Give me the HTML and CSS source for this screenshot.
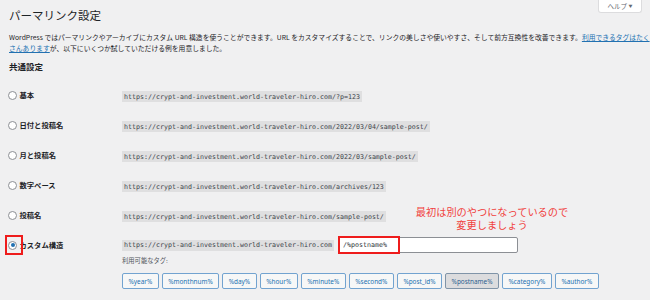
FILE: index.html
```html
<!DOCTYPE html>
<html lang="ja">
<head>
    <meta charset="UTF-8">
    <meta name="viewport" content="width=device-width, initial-scale=1.0">
    <title>パーマリンク設定</title>
    <link rel="stylesheet" href="styles.css">
</head>
<body>
    <div class="wrap">
        <div class="page-head">
            <h1>パーマリンク設定</h1>
            <button type="button" class="help-tab">ヘルプ <span class="caret">▼</span></button>
        </div>

        <p class="intro">WordPress ではパーマリンクやアーカイブにカスタム URL 構造を使うことができます。URL をカスタマイズすることで、リンクの美しさや使いやすさ、そして前方互換性を改善できます。<a href="#">利用できるタグはたく<br>さんあります</a>が、以下にいくつか試していただける例を用意しました。</p>

        <h2>共通設定</h2>

        <div class="settings">
            <div class="row">
                <label class="choice"><span class="radio"></span>基本</label>
                <div><code>https://crypt-and-investment.world-traveler-hiro.com/?p=123</code></div>
            </div>
            <div class="row">
                <label class="choice"><span class="radio"></span>日付と投稿名</label>
                <div><code>https://crypt-and-investment.world-traveler-hiro.com/2022/03/04/sample-post/</code></div>
            </div>
            <div class="row">
                <label class="choice"><span class="radio"></span>月と投稿名</label>
                <div><code>https://crypt-and-investment.world-traveler-hiro.com/2022/03/sample-post/</code></div>
            </div>
            <div class="row">
                <label class="choice"><span class="radio"></span>数字ベース</label>
                <div><code>https://crypt-and-investment.world-traveler-hiro.com/archives/123</code></div>
            </div>
            <div class="row">
                <label class="choice"><span class="radio"></span>投稿名</label>
                <div><code>https://crypt-and-investment.world-traveler-hiro.com/sample-post/</code></div>
            </div>
            <div class="row row-custom">
                <label class="choice"><span class="radio checked"><span class="mark-box mark-radio"></span></span>カスタム構造</label>
                <div>
                    <div class="custom-line">
                        <code>https://crypt-and-investment.world-traveler-hiro.com</code>
                        <div class="input-holder">
                            <input type="text" class="structure" value="/%postname%">
                            <span class="mark-box mark-input"></span>
                        </div>
                    </div>
                    <div class="tags-title">利用可能なタグ:</div>
                    <div class="tags">
                        <button type="button" class="tag">%year%</button>
                        <button type="button" class="tag">%monthnum%</button>
                        <button type="button" class="tag">%day%</button>
                        <button type="button" class="tag">%hour%</button>
                        <button type="button" class="tag">%minute%</button>
                        <button type="button" class="tag">%second%</button>
                        <button type="button" class="tag">%post_id%</button>
                        <button type="button" class="tag active">%postname%</button>
                        <button type="button" class="tag">%category%</button>
                        <button type="button" class="tag">%author%</button>
                    </div>
                </div>
            </div>
        </div>

        <div class="note">最初は別のやつになっているので<br>変更しましょう</div>
    </div>
</body>
</html>
```

FILE: styles.css
```css
body {
    margin: 0;
    background-color: #f0f0f1;
    color: #1d2327;
    font-family: "Noto Sans CJK JP", "Noto Sans", sans-serif;
    font-size: 6.8px;
}
.wrap {
    position: relative;
    padding: 0 8px 0 9px;
    height: 300px;
    overflow: hidden;
}
.page-head {
    display: flex;
    justify-content: space-between;
    align-items: flex-start;
}
h1 {
    margin: 8px 0 0;
    font-size: 11.5px;
    font-weight: 400;
    line-height: 14px;
}
.help-tab {
    width: 44px;
    height: 13px;
    padding: 0;
    background-color: #fff;
    border: 1px solid #dcdcde;
    border-top: none;
    border-radius: 0 0 3px 3px;
    color: #646970;
    font-family: inherit;
    font-size: 6.5px;
    line-height: 12px;
}
.caret {
    font-size: 4px;
    vertical-align: 1px;
}
.intro {
    margin: 10px 0 0;
    line-height: 10.5px;
    white-space: nowrap;
}
.intro a {
    color: #2271b1;
}
h2 {
    margin: 7px 0 0;
    font-size: 8.5px;
    font-weight: 700;
    line-height: 12px;
}
.settings {
    margin-top: 8px;
}
.row {
    display: grid;
    grid-template-columns: 113px auto;
    align-items: center;
    height: 30px;
}
.choice {
    display: flex;
    align-items: center;
    font-size: 7.3px;
    font-weight: 700;
}
.radio {
    position: relative;
    box-sizing: border-box;
    width: 9px;
    height: 9px;
    margin: 0 2.5px 0 -1px;
    background-color: #fff;
    border: 1px solid #8c8f94;
    border-radius: 50%;
}
.radio.checked::before {
    content: "";
    position: absolute;
    top: 1.5px;
    left: 1.5px;
    width: 4px;
    height: 4px;
    border-radius: 50%;
    background-color: #2271b1;
}
code {
    padding: 1.5px 2px;
    background-color: #dfdfe0;
    font-family: "DejaVu Sans Mono", monospace;
    font-size: 6.65px;
    line-height: 8px;
    color: #3c434a;
}
.row-custom {
    align-items: start;
    height: auto;
}
.row-custom .choice {
    height: 16px;
    margin-top: 7px;
}
.custom-line {
    display: flex;
    align-items: center;
    gap: 4px;
    height: 16px;
    margin-top: 7px;
}
.input-holder {
    position: relative;
}
.structure {
    box-sizing: border-box;
    width: 180px;
    height: 16px;
    padding: 0 4px;
    background-color: #fff;
    border: 1px solid #8c8f94;
    border-radius: 2px;
    font-family: "DejaVu Sans Mono", monospace;
    font-size: 6.65px;
    color: #2c3338;
}
.mark-box {
    position: absolute;
    box-sizing: border-box;
    border: 2px solid #ee1c1c;
}
.mark-radio {
    top: -6.5px;
    left: -4.5px;
    width: 18px;
    height: 20px;
}
.mark-input {
    top: -1px;
    left: 0;
    width: 62px;
    height: 18px;
}
.tags-title {
    margin-top: 2.5px;
    font-size: 6.3px;
    line-height: 9px;
    color: #50575e;
}
.tags {
    display: flex;
    gap: 3px;
    margin-top: 8.5px;
}
.tag {
    height: 16px;
    padding: 0 5.5px;
    background-color: #f6f7f7;
    border: 1px solid #72a3d0;
    border-radius: 2px;
    color: #2271b1;
    font-family: "Noto Sans", sans-serif;
    font-size: 6.4px;
}
.tag.active {
    background-color: #dcdcde;
    border-color: #8094a8;
    color: #2c5f8f;
}
.note {
    position: absolute;
    top: 205px;
    left: 412px;
    width: 160px;
    text-align: center;
    color: #f0413d;
    font-size: 10.2px;
    line-height: 13px;
}
```
